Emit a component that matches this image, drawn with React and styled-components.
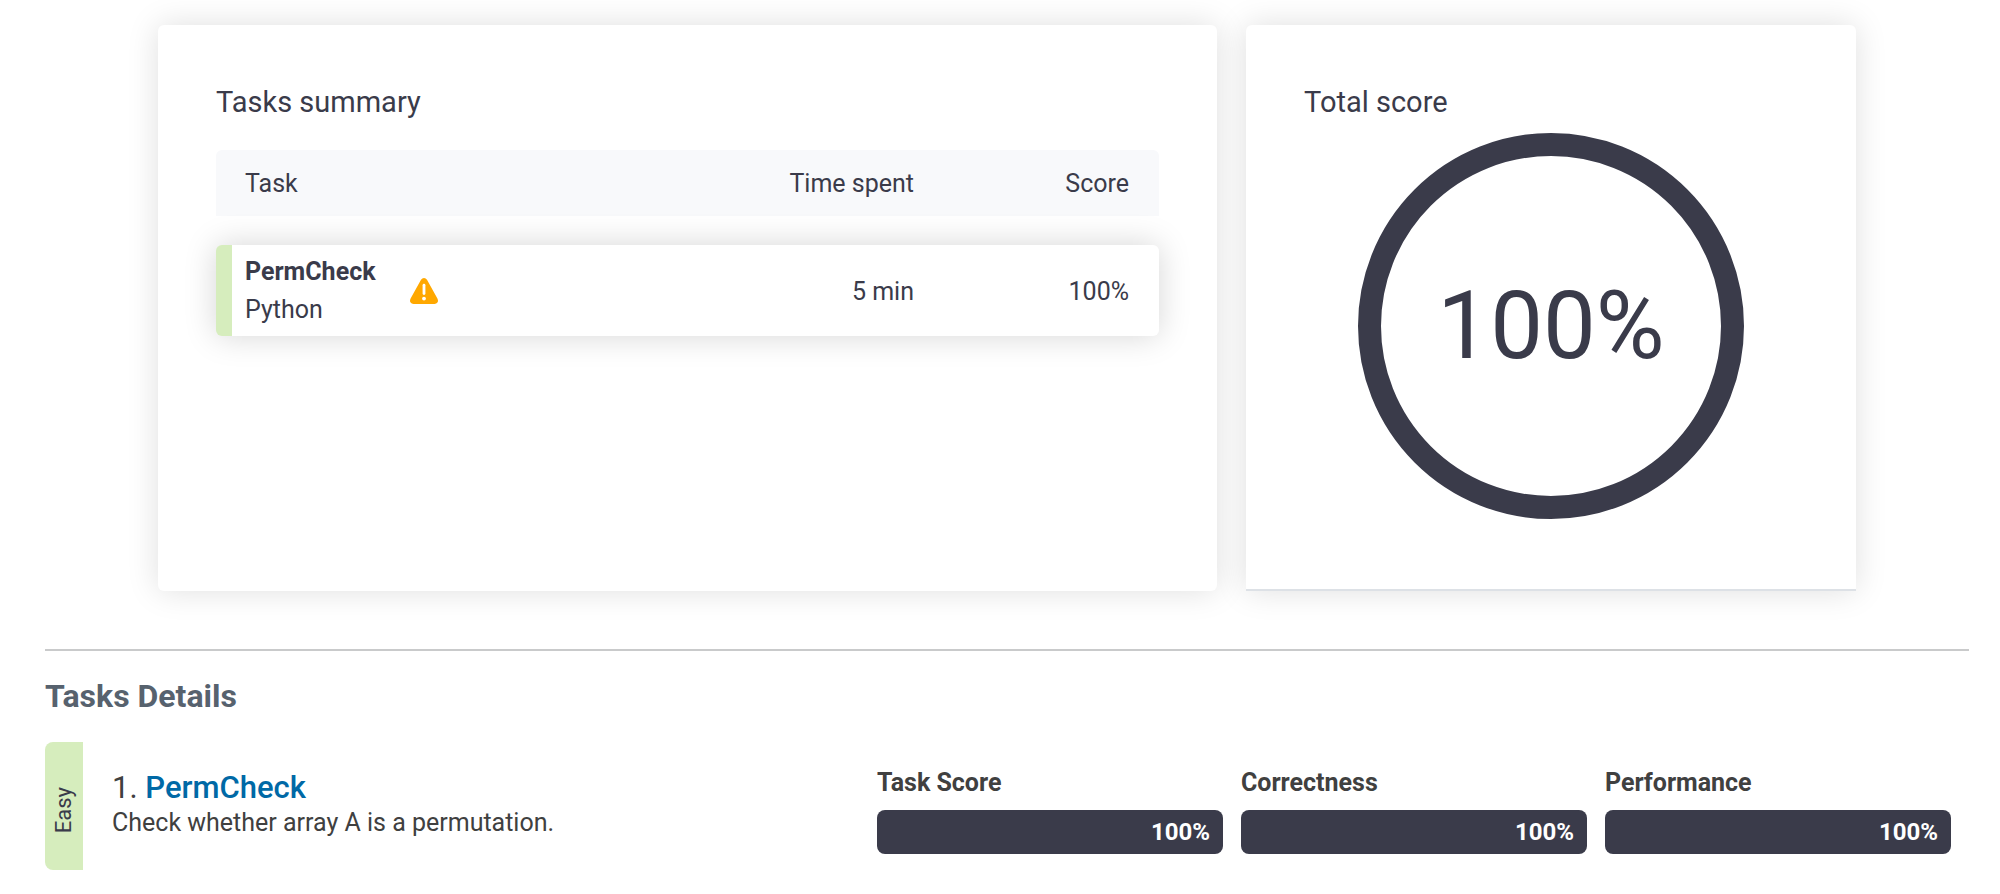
import React from "react";
import styled, { createGlobalStyle } from "styled-components";

const ink = "#3a3b4a";
const easyGreen = "#d6edbd";

const GlobalStyle = createGlobalStyle`
  *, *::before, *::after { box-sizing: border-box; }
  body {
    margin: 0;
    background: #fff;
    color: ${ink};
    font-family: Roboto, "Liberation Sans", sans-serif;
    font-size: 25px;
    line-height: 38px;
  }
`;

const Page = styled.main`
  padding: 25px 31px 24px 45px;
`;

const Summary = styled.section`
  display: grid;
  grid-template-columns: 1059fr 610fr;
  gap: 29px;
  margin: 0 113px;
`;

const Card = styled.article`
  min-width: 0;
  min-height: 566px;
  padding: 58px 58px 70px;
  background: #fff;
  border-radius: ${(p) => (p.$underlined ? "6px 6px 0 0" : "6px")};
  border-bottom: ${(p) => (p.$underlined ? "2px solid #dde1e6" : "0")};
  box-shadow: 0 0 32px rgba(0, 0, 0, 0.13);
`;

const CardTitle = styled.h2`
  margin: 0;
  font-size: 29px;
  font-weight: 400;
  line-height: 38px;
`;

const Table = styled.table`
  display: block;
  margin-top: 29px;
`;

const Head = styled.thead`
  display: block;
  margin-bottom: 29px;
`;

const Body = styled.tbody`
  display: block;
`;

const Row = styled.tr`
  display: grid;
  grid-template-columns: 1fr 215px 215px;
  align-items: center;
  padding-right: 30px;
`;

const HeadRow = styled(Row)`
  height: 66px;
  padding-left: 29px;
  background: #f8f9fb;
  border-radius: 6px 6px 0 0;
`;

const TaskRow = styled(Row)`
  min-height: 91px;
  padding-left: 13px;
  border-left: 16px solid ${easyGreen};
  border-radius: 6px;
  background: #fff;
  box-shadow: 0 0 32px rgba(0, 0, 0, 0.17);
`;

const HeadCell = styled.th`
  padding: 2px 0 0;
  font-weight: 400;
  text-align: ${(p) => (p.$end ? "right" : "left")};
`;

const Cell = styled.td`
  padding: 2px 0 0;
  text-align: ${(p) => (p.$end ? "right" : "left")};
`;

const TaskCell = styled.td`
  display: flex;
  align-items: center;
  gap: 34px;
  padding: 0;
`;

const TaskName = styled.strong`
  display: block;
  font-weight: 700;
`;

const Ring = styled.div`
  display: flex;
  align-items: center;
  justify-content: center;
  width: 386px;
  height: 386px;
  margin: 12px auto 0;
  border: 23px solid ${ink};
  border-radius: 50%;
  font-size: 94px;
  line-height: 112px;
`;

const Details = styled.section`
  margin-top: 58px;
  padding-top: 26px;
  border-top: 2px solid #c9cacb;
`;

const DetailsTitle = styled.h2`
  margin: 0;
  color: #57626e;
  font-size: 32px;
  font-weight: 700;
  line-height: 38px;
`;

const TaskDetail = styled.article`
  display: flex;
  align-items: center;
  min-height: 128px;
  margin-top: 27px;
  padding-right: 18px;
  color: #404040;
`;

const Difficulty = styled.div`
  display: flex;
  align-self: stretch;
  align-items: center;
  justify-content: center;
  width: 38px;
  padding-top: 8px;
  background: ${easyGreen};
  border-radius: 8px 0 0 8px;
  color: ${ink};
`;

const VerticalText = styled.span`
  font-size: 22px;
  line-height: 38px;
  writing-mode: sideways-lr;
`;

const TaskInfo = styled.div`
  flex: 1 1 0;
  min-width: 0;
  padding: 2px 0 0 29px;
`;

const TaskHeading = styled.h3`
  margin: 0;
  font-size: 31px;
  font-weight: 400;
  line-height: 32px;
`;

const TaskLink = styled.a`
  color: #0069a6;
  font-weight: 500;
  text-decoration: none;
`;

const Description = styled.p`
  margin: 0;
`;

const Scores = styled.div`
  display: grid;
  flex: 0 1 1074px;
  grid-template-columns: repeat(3, 1fr);
  gap: 18px;
  padding-top: 6px;
`;

const ScoreLabel = styled.div`
  margin-bottom: 8px;
  font-weight: 700;
`;

const ScoreBar = styled.div`
  padding: 0 13px;
  border-radius: 8px;
  background: ${ink};
  color: #fff;
  font-size: 24px;
  font-weight: 700;
  line-height: 44px;
  text-align: right;
`;

const WarningIcon = () => (
  <svg width="28" height="26" viewBox="0 0 28 26" role="img" aria-label="Warning">
    <path
      d="M11 1.8Q12.2 0 14 0T17 1.8L27.4 20.6Q28.6 23 27.4 24.6Q26.5 26 24.5 26H3.5Q1.5 26 .6 24.6Q-.6 23 .6 20.6Z"
      fill="#ffa800"
    />
    <path d="M14 7.2V15.6" stroke="#fff" strokeWidth="2.8" strokeLinecap="round" />
    <circle cx="14" cy="20.6" r="1.9" fill="#fff" />
  </svg>
);

const scores = [
  { label: "Task Score", value: "100%" },
  { label: "Correctness", value: "100%" },
  { label: "Performance", value: "100%" },
];

export default function App() {
  return (
    <>
      <GlobalStyle />
      <Page>
        <Summary>
          <Card>
            <CardTitle>Tasks summary</CardTitle>
            <Table>
              <Head>
                <HeadRow>
                  <HeadCell>Task</HeadCell>
                  <HeadCell $end>Time spent</HeadCell>
                  <HeadCell $end>Score</HeadCell>
                </HeadRow>
              </Head>
              <Body>
                <TaskRow>
                  <TaskCell>
                    <div>
                      <TaskName>PermCheck</TaskName>
                      Python
                    </div>
                    <WarningIcon />
                  </TaskCell>
                  <Cell $end>5 min</Cell>
                  <Cell $end>100%</Cell>
                </TaskRow>
              </Body>
            </Table>
          </Card>
          <Card $underlined>
            <CardTitle>Total score</CardTitle>
            <Ring>100%</Ring>
          </Card>
        </Summary>
        <Details>
          <DetailsTitle>Tasks Details</DetailsTitle>
          <TaskDetail>
            <Difficulty>
              <VerticalText>Easy</VerticalText>
            </Difficulty>
            <TaskInfo>
              <TaskHeading>
                1. <TaskLink href="#permcheck">PermCheck</TaskLink>
              </TaskHeading>
              <Description>Check whether array A is a permutation.</Description>
            </TaskInfo>
            <Scores>
              {scores.map((s) => (
                <div key={s.label}>
                  <ScoreLabel>{s.label}</ScoreLabel>
                  <ScoreBar>{s.value}</ScoreBar>
                </div>
              ))}
            </Scores>
          </TaskDetail>
        </Details>
      </Page>
    </>
  );
}
